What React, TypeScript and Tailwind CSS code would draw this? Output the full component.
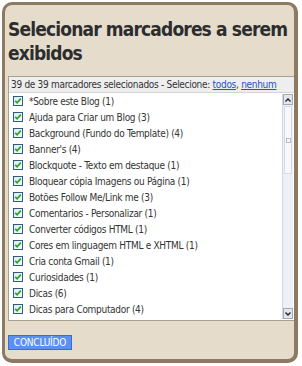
import React from "react";

const items = [
  "*Sobre este Blog (1)",
  "Ajuda para Criar um Blog (3)",
  "Background (Fundo do Template) (4)",
  "Banner's (4)",
  "Blockquote - Texto em destaque (1)",
  "Bloquear cópia Imagens ou Página (1)",
  "Botões Follow Me/Link me (3)",
  "Comentarios - Personalizar (1)",
  "Converter códigos HTML (1)",
  "Cores em linguagem HTML e XHTML (1)",
  "Cria conta Gmail (1)",
  "Curiosidades (1)",
  "Dicas (6)",
  "Dicas para Computador (4)",
  "Dicas para o Blog (2)",
];

function Check() {
  return (
    <svg width="10" height="10" viewBox="0 0 10 10" className="shrink-0">
      <defs>
        <linearGradient id="cbg" x1="0" y1="0" x2="1" y2="1">
          <stop offset="0" stopColor="#dfe3ea" />
          <stop offset="1" stopColor="#ffffff" />
        </linearGradient>
      </defs>
      <rect x="0.5" y="0.5" width="9" height="9" fill="url(#cbg)" stroke="#2c5b8a" />
      <path d="M2.2 4.8 L4.1 6.8 L7.8 2.6" fill="none" stroke="#1faa1f" strokeWidth="1.7" />
    </svg>
  );
}

export default function App() {
  return (
    <div className="w-[302px] h-[366px] bg-white pt-[2px] pl-[2px]" style={{ fontFamily: '"DejaVu Sans Condensed","DejaVu Sans",sans-serif' }}>
      <div className="w-[296px] h-[361px] bg-[#e6dccb] border-[3px] border-r-[4px] border-b-[4px] border-[#8c7a62] rounded-[10px] flex flex-col overflow-hidden">
        <div className="pl-[3px] pt-[12px] text-[19px] leading-[24px] font-bold tracking-[-0.85px] text-[#2b2d2e]">
          Selecionar marcadores a serem exibidos
        </div>
        <div className="mt-[11px] ml-[3px] w-[287px] h-[245px] border border-[#a9a190] bg-white flex flex-col shrink-0">
          <div className="h-[15px] bg-[#eeeeee] text-[10px] leading-[15px] pl-[2px] tracking-[-0.3px] text-[#333] whitespace-nowrap">
            39 de 39 marcadores selecionados - Selecione:{" "}
            <span className="text-[#2252c8] underline">todos</span>,{" "}
            <span className="text-[#2252c8] underline">nenhum</span>
          </div>
          <div className="flex flex-1 min-h-0 border-t border-[#d4d4d4]">
            <div className="flex-1 overflow-hidden pl-[4px]">
              {items.map((t) => (
                <div key={t} className="flex items-center gap-[6px] h-[16px] text-[10px] tracking-[-0.3px] text-[#333] whitespace-nowrap">
                  <Check />
                  <span>{t}</span>
                </div>
              ))}
            </div>
            <div className="w-[11px] mr-[1px] my-[1px] flex flex-col bg-[#eef0f7] border-l border-[#d2d5de]">
              <div className="h-[11px] bg-[#e4e6ee] border border-[#a6a9b4] flex items-center justify-center">
                <svg width="6" height="4" viewBox="0 0 6 4"><path d="M0.5 3.5 L3 1 L5.5 3.5" fill="none" stroke="#222" strokeWidth="1.4" /></svg>
              </div>
              <div className="flex-1 relative">
                <div className="absolute left-[1px] right-[1px] top-[1px] h-[68px] bg-[#f7f8fc] border border-[#d6d9e4] flex items-center justify-center">
                  <div className="w-[5px] h-[5px] border border-[#b8bcc8]" />
                </div>
              </div>
              <div className="h-[11px] bg-[#e4e6ee] border border-[#a6a9b4] flex items-center justify-center">
                <svg width="6" height="4" viewBox="0 0 6 4"><path d="M0.5 0.5 L3 3 L5.5 0.5" fill="none" stroke="#222" strokeWidth="1.4" /></svg>
              </div>
            </div>
          </div>
        </div>
        <div className="mt-[14px] ml-[3px]">
          <button className="h-[15px] w-[64px] bg-[#5b8ff0] border border-[#3a6cc9] text-white text-[10px] leading-[13px] tracking-[-0.2px] flex items-center justify-center">
            CONCLUÍDO
          </button>
        </div>
      </div>
    </div>
  );
}
